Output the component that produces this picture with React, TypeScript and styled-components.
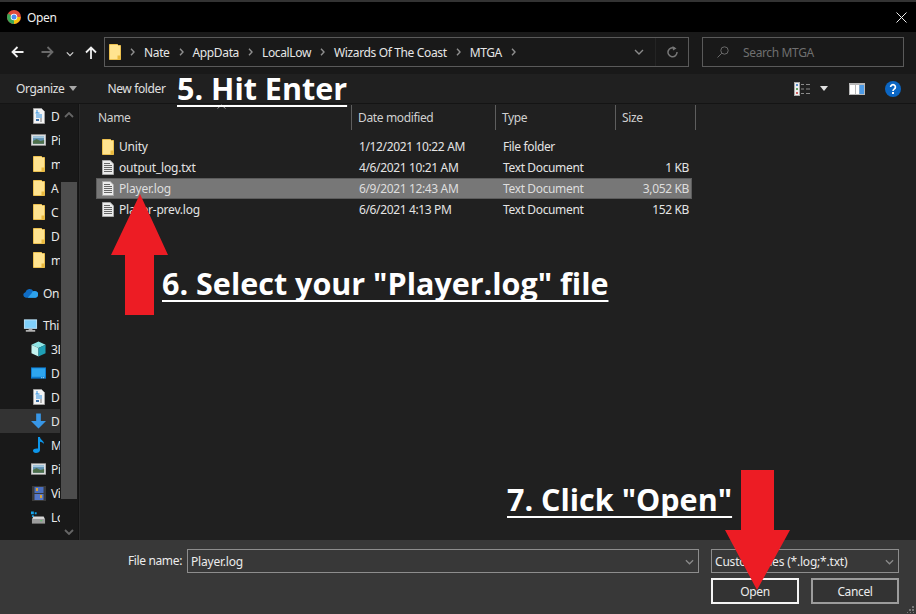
import React from 'react';
import styled, { createGlobalStyle } from 'styled-components';

const GlobalStyle = createGlobalStyle`
  html, body {
    margin: 0;
    padding: 0;
    background: #000;
  }
  * {
    box-sizing: border-box;
  }
`;

const Window = styled.div`
  position: relative;
  width: 916px;
  height: 614px;
  overflow: hidden;
  display: flex;
  flex-direction: column;
  background: #202020;
  color: #e8e8e8;
  font-family: 'Noto Sans', 'Open Sans', sans-serif;
  font-size: 12px;
  letter-spacing: -0.36px;
`;

const TitleBar = styled.div`
  height: 32px;
  flex: none;
  display: flex;
  align-items: center;
  gap: 6px;
  padding: 0 9px 0 7px;
  background: #000;
  border-top: 2px solid #333;
  color: #f0f0f0;
`;

const CloseButton = styled.div`
  margin-left: auto;
  display: flex;
`;

const NavBar = styled.div`
  height: 42px;
  flex: none;
  display: flex;
  align-items: center;
  padding: 0 12px 2px 10px;
  background: #191919;
`;

const NavButton = styled.div<{ $w: number; $pad?: number }>`
  width: ${(p) => p.$w}px;
  padding-left: ${(p) => p.$pad ?? 0}px;
  display: flex;
  justify-content: center;
  flex: none;
`;

const AddressBox = styled.div`
  width: 585px;
  height: 30px;
  display: flex;
  align-items: center;
  border: 1px solid #5a5a5a;
  padding-left: 4px;
  flex: none;
`;

const Crumb = styled.span`
  color: #e6e6e6;
`;

const CrumbSep = styled.span`
  width: 23px;
  display: flex;
  justify-content: center;
  flex: none;
`;

const AddressEnd = styled.div`
  margin-left: auto;
  display: flex;
  align-items: center;
  height: 100%;
`;

const AddressCell = styled.div<{ $w: number; $line?: boolean }>`
  width: ${(p) => p.$w}px;
  height: 100%;
  display: flex;
  align-items: center;
  justify-content: center;
  border-left: ${(p) => (p.$line ? '1px solid #242424' : 'none')};
`;

const SearchBox = styled.div`
  margin-left: 13px;
  width: 202px;
  height: 30px;
  display: flex;
  align-items: center;
  gap: 14px;
  padding-left: 14px;
  border: 1px solid #5a5a5a;
  color: #6f6f6f;
`;

const ToolBar = styled.div`
  height: 30px;
  flex: none;
  display: flex;
  align-items: center;
  padding: 0 15px 0 16px;
  background: #202020;
  border-bottom: 1px solid #141414;
  color: #e0e0e0;
`;

const ToolLabel = styled.span<{ $left?: number }>`
  margin-left: ${(p) => p.$left ?? 0}px;
`;

const ToolIcons = styled.div`
  margin-left: auto;
  display: flex;
  align-items: center;
`;

const ToolIcon = styled.div<{ $left?: number }>`
  display: flex;
  margin-left: ${(p) => p.$left ?? 0}px;
`;

const Main = styled.div`
  flex: 1;
  min-height: 0;
  display: flex;
`;

const Sidebar = styled.div`
  width: 79px;
  flex: none;
  display: flex;
  background: #191919;
  border-right: 1px solid #141414;
`;

const NavList = styled.div`
  width: 60px;
  flex: none;
  overflow: hidden;
  display: flex;
  flex-direction: column;
`;

const NavItem = styled.div<{ $indent?: number; $active?: boolean; $gap?: number }>`
  height: 24px;
  flex: none;
  display: flex;
  align-items: center;
  gap: 5px;
  margin-top: ${(p) => p.$gap ?? 0}px;
  padding-left: ${(p) => p.$indent ?? 31}px;
  background: ${(p) => (p.$active ? '#333' : 'transparent')};
  color: #e8e8e8;
  white-space: nowrap;
`;

const NavGlyph = styled.span`
  width: 15px;
  height: 18px;
  display: flex;
  align-items: center;
  justify-content: center;
  flex: none;
`;

const ScrollTrack = styled.div`
  width: 16px;
  margin-left: 1px;
  flex: none;
  display: flex;
  flex-direction: column;
  align-items: center;
`;

const ScrollArrow = styled.div`
  height: 19px;
  width: 100%;
  display: flex;
  align-items: center;
  justify-content: center;
  padding-top: 2px;
`;

const ScrollGap = styled.div<{ $h: number }>`
  height: ${(p) => p.$h}px;
  flex: none;
`;

const ScrollThumb = styled.div`
  width: 100%;
  height: 317px;
  flex: none;
  background: #4d4d4d;
`;

const Files = styled.div`
  flex: 1;
  min-width: 0;
  background: #202020;
  border-left: 1px solid #2a2a2a;
`;

const HeaderRow = styled.div`
  position: relative;
  display: grid;
  grid-template-columns: 272px 144px 120px 80px;
  height: 26px;
  padding-top: 1px;
`;

const SortCaret = styled.div`
  position: absolute;
  left: 137px;
  top: 0;
  display: flex;
`;

const HeaderCell = styled.div<{ $pad: number }>`
  display: flex;
  align-items: center;
  padding-left: ${(p) => p.$pad}px;
  border-right: 1px solid #5e5e5e;
  color: #d0d0d0;
`;

const FileList = styled.div`
  padding: 6px 0 0 16px;
`;

const FileRow = styled.div<{ $selected?: boolean }>`
  width: 596px;
  height: 21px;
  display: grid;
  grid-template-columns: 255px 144px 120px 75px;
  align-items: center;
  border: 1px solid ${(p) => (p.$selected ? '#5c5c5c' : 'transparent')};
  background: ${(p) => (p.$selected ? '#777' : 'transparent')};
  color: ${(p) => (p.$selected ? '#dedede' : '#e4e4e4')};
`;

const NameCell = styled.div`
  display: flex;
  align-items: center;
  gap: 4px;
  padding-left: 3px;
  white-space: nowrap;
  letter-spacing: -0.2px;
`;

const FileCell = styled.div<{ $right?: boolean }>`
  padding-left: 7px;
  padding-right: ${(p) => (p.$right ? '2px' : '0')};
  text-align: ${(p) => (p.$right ? 'right' : 'left')};
  white-space: nowrap;
`;

const Footer = styled.div`
  position: relative;
  height: 74px;
  flex: none;
  background: #383838;
  display: grid;
  grid-template-columns: 187px 512px 200px;
  grid-template-rows: 24px 26px;
  row-gap: 5px;
  padding-top: 9px;
  align-items: stretch;
`;

const FooterLabel = styled.div`
  display: flex;
  align-items: center;
  justify-content: flex-end;
  padding: 0 5px 2px 0;
  color: #ececec;
`;

const Field = styled.div`
  display: flex;
  align-items: center;
  justify-content: space-between;
  padding: 1px 4px 0 3px;
  border: 1px solid #8d8d8d;
  color: #ececec;
  white-space: nowrap;
  letter-spacing: -0.2px;
`;

const FilterField = styled(Field)`
  margin-left: 12px;
`;

const ButtonRow = styled.div`
  grid-column: 3;
  margin-left: 12px;
  display: flex;
  gap: 12px;
`;

const DialogButton = styled.div<{ $primary?: boolean }>`
  width: 88px;
  height: 26px;
  display: flex;
  align-items: center;
  justify-content: center;
  border: 2px solid ${(p) => (p.$primary ? '#f4f4f4' : '#9c9c9c')};
  color: #ececec;
  background: #333;
`;

const Grip = styled.div`
  position: absolute;
  right: 1px;
  bottom: 1px;
  display: flex;
`;

const Callout = styled.div<{ $x: number; $y: number }>`
  position: absolute;
  left: ${(p) => p.$x}px;
  top: ${(p) => p.$y}px;
  font-family: 'Open Sans', 'Noto Sans', sans-serif;
  font-weight: 700;
  font-size: 30.5px;
  line-height: 40px;
  letter-spacing: 0;
  color: #fff;
  white-space: nowrap;
  text-decoration: underline;
  text-decoration-thickness: 2px;
  text-underline-offset: 5px;
  text-decoration-skip-ink: none;
`;

const RedArrow = styled.svg<{ $x: number; $y: number }>`
  position: absolute;
  left: ${(p) => p.$x}px;
  top: ${(p) => p.$y}px;
`;

const Chevron = ({ color = '#8a8a8a', w = 10, stroke = 1.4 }: { color?: string; w?: number; stroke?: number }) => (
  <svg width={w} height={6} viewBox="0 0 10 6" fill="none">
    <path d="M1 1l4 4 4-4" stroke={color} strokeWidth={stroke} />
  </svg>
);

const Sep = () => (
  <svg width="5" height="8" viewBox="0 0 5 8" fill="none">
    <path d="M1 .8L4 4 1 7.2" stroke="#8f8f8f" strokeWidth="1.4" />
  </svg>
);

const Triangle = ({ color = '#a8a8a8' }: { color?: string }) => (
  <svg width="8" height="5" viewBox="0 0 8 5">
    <path d="M0 0h8L4 5z" fill={color} />
  </svg>
);

const FolderIcon = () => (
  <svg width="12" height="16" viewBox="0 0 12 16">
    <path d="M.5.5h8l1 1h2v14H.5z" fill="#ffe38f" stroke="#ecc04f" />
    <path d="M8.500 15.500v-4h3v4z" fill="#e9b93e" />
  </svg>
);

const DocIcon = () => (
  <svg width="12" height="15" viewBox="0 0 12 15" fill="none">
    <path d="M.5.5h7.700l3.300 3.300v10.700H.5z" fill="#ececec" stroke="#a8a8a8" />
    <path d="M2 3.500h6M2 5.500h8M2 7.500h8M2 9.500h8M2 11.500h8" stroke="#666" />
  </svg>
);

const DocumentsIcon = () => (
  <svg width="12" height="16" viewBox="0 0 12 16">
    <path d="M.5.5h8l3 3v12H.5z" fill="#f3f3f3" stroke="#a0a0a0" />
    <path d="M4 2v3M2.500 5h4M3 7h6M3 9h6" stroke="#2a8ee0" />
    <path d="M3 11h3v2H3z" fill="#3a6ea5" />
    <path d="M7 11h2M7 13h2" stroke="#777" />
  </svg>
);

const PicturesIcon = () => (
  <svg width="16" height="12" viewBox="0 0 16 12">
    <rect x=".5" y=".5" width="15" height="11" fill="#eee" stroke="#b5b5b5" />
    <rect x="2" y="2" width="12" height="8" fill="#5e8fb0" />
    <path d="M2 7l4-2 4 2 4-1v4H2z" fill="#4e6f4a" />
    <rect x="2" y="2" width="12" height="2" fill="#a4c8de" />
  </svg>
);

const CloudIcon = () => (
  <svg width="16" height="10" viewBox="0 0 16 10">
    <path d="M3 10a3 3 0 0 1-.4-5.900A4.500 4.500 0 0 1 11 3.200 3.400 3.400 0 0 1 15.900 7 3 3 0 0 1 13 10z" fill="#0f6cc4" />
    <path d="M5 10l4-4.500a3 3 0 0 1 7 2.200A3 3 0 0 1 13 10z" fill="#2ea2ec" />
  </svg>
);

const ComputerIcon = () => (
  <svg width="16" height="13" viewBox="0 0 16 13">
    <rect x="1.500" y=".5" width="13" height="9" fill="#7fd0fb" stroke="#c0e6fb" />
    <rect x="6" y="10" width="4" height="1.500" fill="#aaa" />
    <rect x="3" y="11.500" width="10" height="1.500" fill="#d5d5d5" />
  </svg>
);

const CubeIcon = () => (
  <svg width="16" height="16" viewBox="0 0 16 16">
    <path d="M8 0l7.500 3.500L8 7 .5 3.500z" fill="#8fe6e6" />
    <path d="M.5 3.500L8 7v9l-7.500-3.500z" fill="#c4f3f0" />
    <path d="M15.500 3.500L8 7v9l7.500-3.500z" fill="#1f9fb5" />
  </svg>
);

const DesktopIcon = () => (
  <svg width="16" height="12" viewBox="0 0 16 12">
    <rect width="16" height="12" fill="#0c7ad0" />
    <rect x="1" y="1" width="14" height="9" fill="#2ea6f0" />
    <path d="M11 11h1M13 11h1" stroke="#dff" />
  </svg>
);

const DownloadIcon = () => (
  <svg width="16" height="16" viewBox="0 0 16 16">
    <path d="M5.500 0h5v8H16l-8 8-8-8h5.500z" fill="#3896e6" />
  </svg>
);

const MusicIcon = () => (
  <svg width="12" height="16" viewBox="0 0 12 16">
    <path d="M5 0h2c0 3 4 3.500 4 7-1-1.500-2.500-2-4-2.300V13c0 2-2 3-4 3S0 15 0 13.500 2.500 11 5 11.600z" fill="#0d96ea" />
  </svg>
);

const VideoIcon = () => (
  <svg width="14" height="15" viewBox="0 0 14 15">
    <rect width="14" height="15" fill="#3a3a3a" />
    <rect x="2.500" y="1" width="9" height="6" fill="#4a6fc0" />
    <rect x="2.500" y="8" width="9" height="6" fill="#5577c8" />
    <path d="M4 2h2v3H4zM8 9h2v3H8z" fill="#d8a33a" />
  </svg>
);

const DriveIcon = () => (
  <svg width="16" height="13" viewBox="0 0 16 13">
    <path d="M0 0h3v3H0zM4 1h2v2H4zM1 4h2v2H1z" fill="#15a4ea" />
    <path d="M2.500 5.500h11L15 8.500H1z" fill="#d8d8d8" />
    <rect x="1" y="8" width="14" height="5" fill="#9c9c9c" />
    <path d="M10 10h2" stroke="#4ccb5c" />
  </svg>
);

const ChromeIcon = () => (
  <svg width="14" height="14" viewBox="0 0 14 14">
    <circle cx="7" cy="7" r="7" fill="#e04a3a" />
    <path d="M7 7L1 3.500A7 7 0 0 0 7 14z" fill="#3aa757" />
    <path d="M7 7h6.600A7 7 0 0 1 7 14z" fill="#f4c20d" />
    <circle cx="7" cy="7" r="3.300" fill="#fff" />
    <circle cx="7" cy="7" r="2.500" fill="#4a8cf0" />
  </svg>
);

// the labels are cut by the narrow pane, only the part that shows is kept
const sideItems: { key: string; label: string; icon: React.ReactNode; indent?: number; active?: boolean; gap?: number }[] = [
  { key: 'docs', label: 'D', icon: <DocumentsIcon /> },
  { key: 'pics', label: 'Pi', icon: <PicturesIcon /> },
  { key: 'f1', label: 'm', icon: <FolderIcon /> },
  { key: 'f2', label: 'A', icon: <FolderIcon /> },
  { key: 'f3', label: 'C', icon: <FolderIcon /> },
  { key: 'f4', label: 'D', icon: <FolderIcon /> },
  { key: 'f5', label: 'm', icon: <FolderIcon /> },
  { key: 'one', label: 'On', icon: <CloudIcon />, indent: 23, gap: 9 },
  { key: 'pc', label: 'Thi', icon: <ComputerIcon />, indent: 23, gap: 8 },
  { key: '3d', label: '3D', icon: <CubeIcon /> },
  { key: 'desk', label: 'D', icon: <DesktopIcon /> },
  { key: 'docs2', label: 'D', icon: <DocumentsIcon /> },
  { key: 'down', label: 'D', icon: <DownloadIcon />, active: true },
  { key: 'music', label: 'M', icon: <MusicIcon /> },
  { key: 'pics2', label: 'Pi', icon: <PicturesIcon /> },
  { key: 'vid', label: 'Vi', icon: <VideoIcon /> },
  { key: 'disk', label: 'Lo', icon: <DriveIcon /> },
];

const files = [
  { name: 'Unity', date: '1/12/2021 10:22 AM', type: 'File folder', size: '', folder: true },
  { name: 'output_log.txt', date: '4/6/2021 10:21 AM', type: 'Text Document', size: '1 KB' },
  { name: 'Player.log', date: '6/9/2021 12:43 AM', type: 'Text Document', size: '3,052 KB', selected: true },
  { name: 'Player-prev.log', date: '6/6/2021 4:13 PM', type: 'Text Document', size: '152 KB' },
];

const crumbs = ['Nate', 'AppData', 'LocalLow', 'Wizards Of The Coast', 'MTGA'];

const App: React.FC = () => {
  return (
    <Window>
      <GlobalStyle />
      <TitleBar>
        <ChromeIcon />
        <span>Open</span>
        <CloseButton>
          <svg width="11" height="11" viewBox="0 0 11 11">
            <path d="M.5.500l10 10M10.500.500l-10 10" stroke="#eee" strokeWidth="1" />
          </svg>
        </CloseButton>
      </TitleBar>

      <NavBar>
        <NavButton $w={15}>
          <svg width="13" height="12" viewBox="0 0 13 12" fill="none">
            <path d="M12.500 6H1.500M6.500 1l-5 5 5 5" stroke="#f0f0f0" strokeWidth="1.800" />
          </svg>
        </NavButton>
        <NavButton $w={45}>
          <svg width="13" height="12" viewBox="0 0 13 12" fill="none">
            <path d="M.5 6h11M6.500 1l5 5-5 5" stroke="#6a6a6a" strokeWidth="1.800" />
          </svg>
        </NavButton>
        <NavButton $w={0}>
          <div>
            <Chevron color="#cfcfcf" w={8} stroke={1.600} />
          </div>
        </NavButton>
        <NavButton $w={34} $pad={8}>
          <svg width="12" height="13" viewBox="0 0 12 13" fill="none">
            <path d="M6 13V1.500M1 6.500l5-5 5 5" stroke="#f0f0f0" strokeWidth="1.800" />
          </svg>
        </NavButton>
        <AddressBox>
          <FolderIcon />
          {crumbs.map((crumb) => (
            <React.Fragment key={crumb}>
              <CrumbSep>
                <Sep />
              </CrumbSep>
              <Crumb>{crumb}</Crumb>
            </React.Fragment>
          ))}
          <CrumbSep>
            <Sep />
          </CrumbSep>
          <AddressEnd>
            <AddressCell $w={32}>
              <Chevron />
            </AddressCell>
            <AddressCell $w={33} $line>
              <svg width="11" height="12" viewBox="0 0 11 12" fill="none">
                <path d="M8 2.500a4.500 4.500 0 1 0 2 3.500" stroke="#777" strokeWidth="1.500" />
                <path d="M5.500 0L9.500 2.500 6 4.500z" fill="#777" />
              </svg>
            </AddressCell>
          </AddressEnd>
        </AddressBox>
        <SearchBox>
          <svg width="12" height="12" viewBox="0 0 12 12" fill="none">
            <circle cx="7.500" cy="4.500" r="3.700" stroke="#6a6a6a" />
            <path d="M4.800 7.200L.5 11.500" stroke="#6a6a6a" />
          </svg>
          <span>Search MTGA</span>
        </SearchBox>
      </NavBar>

      <ToolBar>
        <ToolLabel>Organize</ToolLabel>
        <ToolIcon $left={5}>
          <Triangle />
        </ToolIcon>
        <ToolLabel $left={30}>New folder</ToolLabel>
        <ToolIcons>
          <ToolIcon>
            <svg width="16" height="14" viewBox="0 0 16 14" fill="none">
              <rect x=".5" y=".5" width="5" height="13" fill="#eee" stroke="#aaa" />
              <path d="M2 3h2" stroke="#2a6ec0" strokeWidth="1.500" />
              <path d="M2 7h2" stroke="#3a8a3a" strokeWidth="1.500" />
              <path d="M2 11h2" stroke="#c03030" strokeWidth="1.500" />
              <path d="M7 2.500h3M12 2.500h4M7 7h3M12 7h4M7 11.500h3M12 11.500h4" stroke="#8a8a8a" />
            </svg>
          </ToolIcon>
          <ToolIcon $left={10}>
            <Triangle color="#e0e0e0" />
          </ToolIcon>
          <ToolIcon $left={21}>
            <svg width="16" height="12" viewBox="0 0 16 12">
              <rect width="16" height="12" fill="#b8b8b8" />
              <rect x="1" y="2" width="5" height="9" fill="#fff" />
              <rect x="7" y="2" width="3" height="9" fill="#fff" />
              <rect x="10.500" y="2" width="4.500" height="9" fill="#4d9be6" />
            </svg>
          </ToolIcon>
          <ToolIcon $left={20}>
            <svg width="16" height="16" viewBox="0 0 16 16">
              <circle cx="8" cy="8" r="8" fill="#0b66c3" />
              <path d="M5.600 6a2.400 2.400 0 1 1 3.600 2.100c-.8.500-1.200.9-1.200 1.900" fill="none" stroke="#fff" strokeWidth="1.700" />
              <rect x="7" y="11" width="2" height="2" fill="#fff" />
            </svg>
          </ToolIcon>
        </ToolIcons>
      </ToolBar>

      <Main>
        <Sidebar>
          <NavList>
            {sideItems.map((item) => (
              <NavItem key={item.key} $indent={item.indent} $active={item.active} $gap={item.gap}>
                <NavGlyph>{item.icon}</NavGlyph>
                <span>{item.label}</span>
              </NavItem>
            ))}
          </NavList>
          <ScrollTrack>
            <ScrollArrow>
              <svg width="10" height="6" viewBox="0 0 10 6" fill="none">
                <path d="M1 5l4-4 4 4" stroke="#666" strokeWidth="1.800" />
              </svg>
            </ScrollArrow>
            <ScrollGap $h={59} />
            <ScrollThumb />
            <ScrollGap $h={22} />
            <ScrollArrow>
              <Chevron color="#666" stroke={1.800} />
            </ScrollArrow>
          </ScrollTrack>
        </Sidebar>
        <Files>
          <HeaderRow>
            <SortCaret>
              <svg width="9" height="5" viewBox="0 0 9 5" fill="none">
                <path d="M.5 4.500l4-3.500 4 3.500" stroke="#9a9a9a" />
              </svg>
            </SortCaret>
            <HeaderCell $pad={18}>Name</HeaderCell>
            <HeaderCell $pad={6}>Date modified</HeaderCell>
            <HeaderCell $pad={6}>Type</HeaderCell>
            <HeaderCell $pad={6}>Size</HeaderCell>
          </HeaderRow>
          <FileList>
            {files.map((file) => (
              <FileRow key={file.name} $selected={file.selected}>
                <NameCell>
                  <NavGlyph>{file.folder ? <FolderIcon /> : <DocIcon />}</NavGlyph>
                  <span>{file.name}</span>
                </NameCell>
                <FileCell>{file.date}</FileCell>
                <FileCell>{file.type}</FileCell>
                <FileCell $right>{file.size}</FileCell>
              </FileRow>
            ))}
          </FileList>
        </Files>
      </Main>

      <Footer>
        <FooterLabel>File name:</FooterLabel>
        <Field>
          <span>Player.log</span>
          <Chevron w={9} />
        </Field>
        <FilterField>
          <span>Custom Files (*.log;*.txt)</span>
          <Chevron w={9} />
        </FilterField>
        <ButtonRow>
          <DialogButton $primary>Open</DialogButton>
          <DialogButton>Cancel</DialogButton>
        </ButtonRow>
        <Grip>
          <svg width="8" height="8" viewBox="0 0 8 8">
            <path d="M5 1h2v2H5zM2 4h2v2H2zM5 4h2v2H5zM0 7h1v1H0zM3 7h1v1H3zM6 7h1v1H6z" fill="#777" />
          </svg>
        </Grip>
      </Footer>

      <Callout $x={177} $y={68}>5. Hit Enter</Callout>
      <Callout $x={162} $y={263}>6. Select your "Player.log" file</Callout>
      <Callout $x={507} $y={479}>7. Click "Open"</Callout>

      <RedArrow $x={111} $y={194} width="57" height="121" viewBox="0 0 57 121">
        <path d="M29 0L57 61H43V121H14V61H0z" fill="#ed1c24" />
      </RedArrow>
      <RedArrow $x={725} $y={470} width="65" height="120" viewBox="0 0 65 120">
        <path d="M16 0H49V60H65L32 120 0 60H16z" fill="#ed1c24" />
      </RedArrow>
    </Window>
  );
};

export default App;
